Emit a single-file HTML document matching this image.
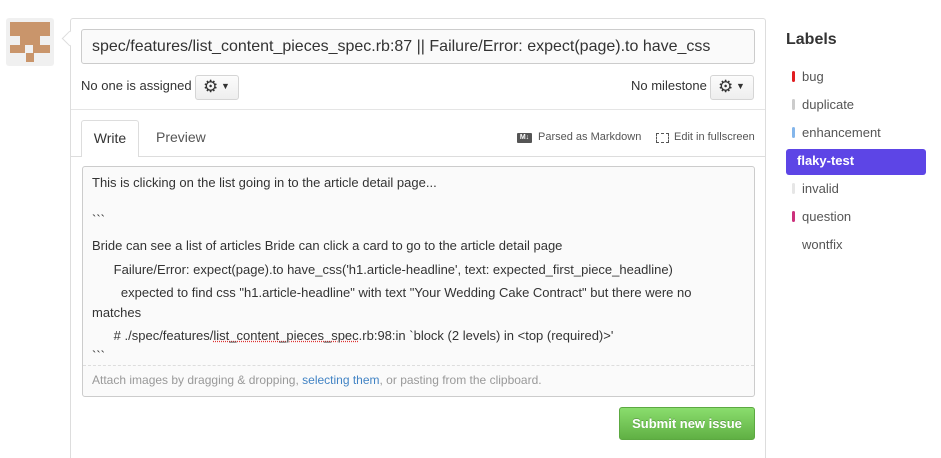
<!DOCTYPE html>
<html><head><style>
body{margin:0;width:941px;height:450px;background:#fff;font-family:"Liberation Sans",Helvetica,Arial,sans-serif;position:relative;overflow:hidden;color:#333}
.a{position:absolute}
.gear{display:inline-block;position:absolute;width:44px;height:25px;border:1px solid #d5d5d5;border-radius:3px;background:linear-gradient(#fcfcfc,#eee);box-sizing:border-box}
.lab{position:absolute;left:802px;font-size:13px;color:#555}
.bar{position:absolute;left:792px;width:3px;height:11px;border-radius:2px}
.t{position:absolute;font-size:13px;color:#333;white-space:pre;line-height:16px}
</style></head><body>
<div class="a" style="left:6px;top:18px;width:48px;height:48px;background:#f0f0f0;border-radius:3px"></div>
<div class="a" style="left:10px;top:22px;width:40px;height:14px;background:#c9956b"></div>
<div class="a" style="left:20px;top:36px;width:20px;height:9px;background:#c9956b"></div>
<div class="a" style="left:10px;top:45px;width:15px;height:8px;background:#c9956b"></div>
<div class="a" style="left:33px;top:45px;width:17px;height:8px;background:#c9956b"></div>
<div class="a" style="left:26px;top:53px;width:8px;height:9px;background:#c9956b"></div>

<div class="a" style="left:70px;top:18px;width:696px;height:440px;border:1px solid #ddd;border-bottom:none;box-sizing:border-box;border-radius:3px 3px 0 0"></div>
<div class="a" style="left:64px;top:33px;width:10px;height:10px;background:#fff;border-left:1px solid #ddd;border-bottom:1px solid #ddd;transform:rotate(45deg)"></div>

<div class="a" style="left:81px;top:29px;width:674px;height:35px;border:1px solid #ccc;border-radius:3px;background:#fafafa;box-sizing:border-box;font-size:16px;line-height:33px;padding-left:10px;color:#333">spec/features/list_content_pieces_spec.rb:87 || Failure/Error: expect(page).to have_css</div>

<div class="a" style="left:81px;top:78px;font-size:13px;color:#333">No one is assigned</div>
<div class="gear" style="left:195px;top:75px"><span style="position:absolute;left:7px;top:1px;font-size:17px;color:#333">⚙</span><span style="position:absolute;left:25px;top:5px;font-size:9px">▼</span></div>
<div class="a" style="left:631px;top:78px;font-size:13px;color:#333">No milestone</div>
<div class="gear" style="left:710px;top:75px"><span style="position:absolute;left:7px;top:1px;font-size:17px;color:#333">⚙</span><span style="position:absolute;left:25px;top:5px;font-size:9px">▼</span></div>

<div class="a" style="left:71px;top:109px;width:694px;height:1px;background:#e5e5e5"></div>
<div class="a" style="left:71px;top:156px;width:694px;height:1px;background:#ddd"></div>
<div class="a" style="left:81px;top:120px;width:58px;height:37px;border:1px solid #ddd;border-bottom:none;background:#fff;box-sizing:border-box;border-radius:3px 3px 0 0;font-size:14px;text-align:center;line-height:34px;color:#333">Write</div>
<div class="a" style="left:156px;top:129px;font-size:14px;color:#555">Preview</div>
<div class="a" style="left:517px;top:133px;width:15px;height:10px;background:#555;border-radius:1px;color:#fff;font-size:7px;font-weight:bold;line-height:10px;text-align:center">M↓</div>
<div class="a" style="left:538px;top:131px;font-size:11px;color:#555">Parsed as Markdown</div>
<div class="a" style="left:656px;top:133px;width:11px;height:8px;border:1px dashed #555"></div>
<div class="a" style="left:674px;top:131px;font-size:11px;color:#555">Edit in fullscreen</div>

<div class="a" style="left:82px;top:166px;width:673px;height:231px;border:1px solid #ccc;border-radius:3px;background:#fafafa;box-sizing:border-box"></div>
<div class="a" style="left:83px;top:167px;width:671px;height:198px;overflow:hidden">
<div class="t" style="left:9px;top:8px">This is clicking on the list going in to the article detail page...</div>
<div class="t" style="left:9px;top:45px">&#96;&#96;&#96;</div>
<div class="t" style="left:9px;top:71px">Bride can see a list of articles Bride can click a card to go to the article detail page</div>
<div class="t" style="left:9px;top:95px">      Failure/Error: expect(page).to have_css('h1.article-headline', text: expected_first_piece_headline)</div>
<div class="t" style="left:9px;top:118px">        expected to find css "h1.article-headline" with text "Your Wedding Cake Contract" but there were no</div>
<div class="t" style="left:9px;top:138px">matches</div>
<div class="t" style="left:9px;top:161px">      # ./spec/features/<span style="text-decoration:underline dotted #d33">list_content_pieces_spec</span>.rb:98:in &#96;block (2 levels) in &lt;top (required)&gt;'</div>
<div class="t" style="left:9px;top:181px">&#96;&#96;&#96;</div>
</div>
<div class="a" style="left:83px;top:365px;width:671px;border-top:1px dashed #ddd"></div>
<div class="a" style="left:92px;top:373px;font-size:12px;color:#999">Attach images by dragging &amp; dropping, <span style="color:#4183c4">selecting them</span>, or pasting from the clipboard.</div>

<div class="a" style="left:619px;top:407px;width:136px;height:33px;border:1px solid #5ca941;border-radius:3px;background:linear-gradient(#8add6d,#60b044);box-sizing:border-box;color:#fff;font-weight:bold;font-size:13px;text-align:center;line-height:31px;text-shadow:0 -1px 0 rgba(0,0,0,.2)">Submit new issue</div>

<div class="a" style="left:786px;top:31px;font-size:16px;font-weight:bold;color:#333">Labels</div>
<div class="bar" style="top:71px;background:#e11d21"></div><div class="lab" style="top:69px">bug</div>
<div class="bar" style="top:99px;background:#ccc"></div><div class="lab" style="top:97px">duplicate</div>
<div class="bar" style="top:127px;background:#84b6eb"></div><div class="lab" style="top:125px">enhancement</div>
<div class="a" style="left:786px;top:149px;width:140px;height:26px;background:#5d45e6;border-radius:3px"></div><div class="lab" style="top:153px;left:797px;color:#fff;font-weight:bold">flaky-test</div>
<div class="bar" style="top:183px;background:#e6e6e6"></div><div class="lab" style="top:181px">invalid</div>
<div class="bar" style="top:211px;background:#cc317c"></div><div class="lab" style="top:209px">question</div>
<div class="lab" style="top:237px">wontfix</div>
</body></html>
